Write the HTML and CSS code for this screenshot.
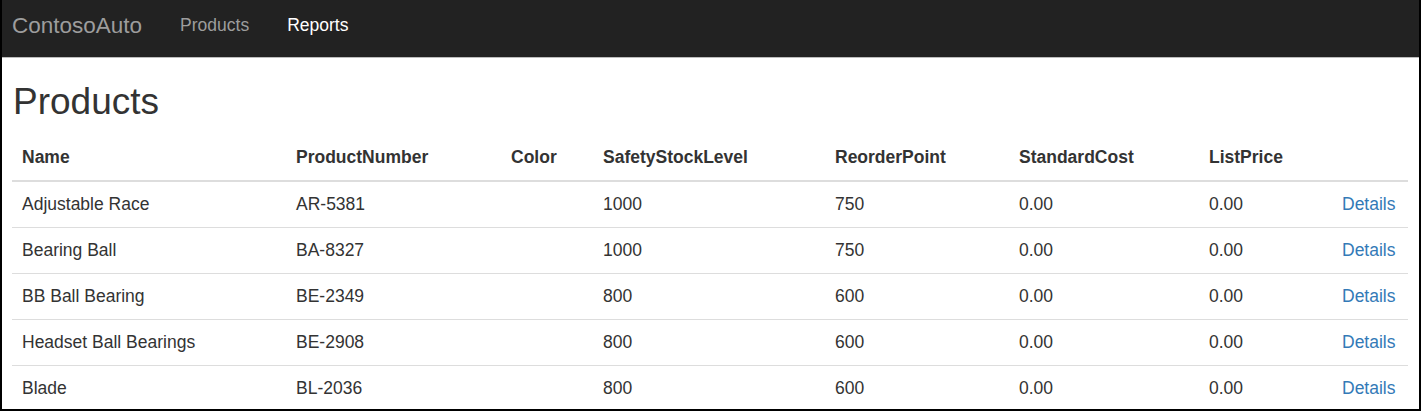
FILE: index.html
```html
<!DOCTYPE html>
<html>
<head>
<meta charset="utf-8">
<title>Products - ContosoAuto</title>
<link rel="stylesheet" href="styles.css">
</head>
<body>
<div class="frame">
  <nav class="navbar">
    <a class="brand" href="#">ContosoAuto</a>
    <a class="nav-link" href="#">Products</a>
    <a class="nav-link active" href="#">Reports</a>
  </nav>
  <main class="content">
    <h1 class="title">Products</h1>
    <table class="table">
      <colgroup>
        <col class="c1"><col class="c2"><col class="c3"><col class="c4"><col class="c5"><col class="c6"><col class="c7"><col class="c8">
      </colgroup>
      <thead>
        <tr><th>Name</th><th>ProductNumber</th><th>Color</th><th>SafetyStockLevel</th><th>ReorderPoint</th><th>StandardCost</th><th>ListPrice</th><th></th></tr>
      </thead>
      <tbody>
        <tr><td>Adjustable Race</td><td>AR-5381</td><td></td><td>1000</td><td>750</td><td>0.00</td><td>0.00</td><td><a href="#">Details</a></td></tr>
        <tr><td>Bearing Ball</td><td>BA-8327</td><td></td><td>1000</td><td>750</td><td>0.00</td><td>0.00</td><td><a href="#">Details</a></td></tr>
        <tr><td>BB Ball Bearing</td><td>BE-2349</td><td></td><td>800</td><td>600</td><td>0.00</td><td>0.00</td><td><a href="#">Details</a></td></tr>
        <tr><td>Headset Ball Bearings</td><td>BE-2908</td><td></td><td>800</td><td>600</td><td>0.00</td><td>0.00</td><td><a href="#">Details</a></td></tr>
        <tr><td>Blade</td><td>BL-2036</td><td></td><td>800</td><td>600</td><td>0.00</td><td>0.00</td><td><a href="#">Details</a></td></tr>
      </tbody>
    </table>
  </main>
</div>
</body>
</html>
```
FILE: styles.css
```css
html, body {
  margin: 0;
  padding: 0;
  background: #fff;
}
body {
  font-family: "Liberation Sans", Arial, sans-serif;
  font-size: 17.5px;
  color: #333;
}
.frame {
  box-sizing: border-box;
  width: 1421px;
  height: 411px;
  border-left: 2px solid #000;
  border-right: 2px solid #000;
  border-bottom: 2px solid #000;
  overflow: hidden;
  background: #fff;
}
.navbar {
  display: flex;
  align-items: flex-start;
  height: 57px;
  background: #222;
  border-bottom: 1px solid #bdbdbd;
  padding-left: 10px;
}
.navbar a {
  text-decoration: none;
  line-height: 51px;
}
.brand {
  font-size: 22.5px;
  color: #9d9d9d;
  padding-right: 19px;
}
.nav-link {
  font-size: 17.5px;
  color: #9d9d9d;
  padding: 0 19px;
}
.nav-link.active {
  color: #fff;
}
.content {
  padding: 0 11px 0 11px;
}
.title {
  margin: 24px 0 13px 0;
  font-size: 37px;
  line-height: 40px;
  font-weight: 400;
  color: #333;
}
.table {
  width: 1396px;
  margin-left: -1px;
  border-collapse: collapse;
  table-layout: fixed;
}
.c1 { width: 274px; }
.c2 { width: 215px; }
.c3 { width: 92px; }
.c4 { width: 232px; }
.c5 { width: 184px; }
.c6 { width: 190px; }
.c7 { width: 133px; }
.c8 { width: 76px; }
.table th, .table td {
  padding: 10px;
  line-height: 25px;
  text-align: left;
  vertical-align: top;
  white-space: nowrap;
}
.table th {
  font-weight: 700;
  border-bottom: 2px solid #ddd;
}
.table td {
  border-top: 1px solid #ddd;
}
.table tbody tr:first-child td {
  border-top: 0;
}
.table a {
  color: #337ab7;
  text-decoration: none;
}
```
